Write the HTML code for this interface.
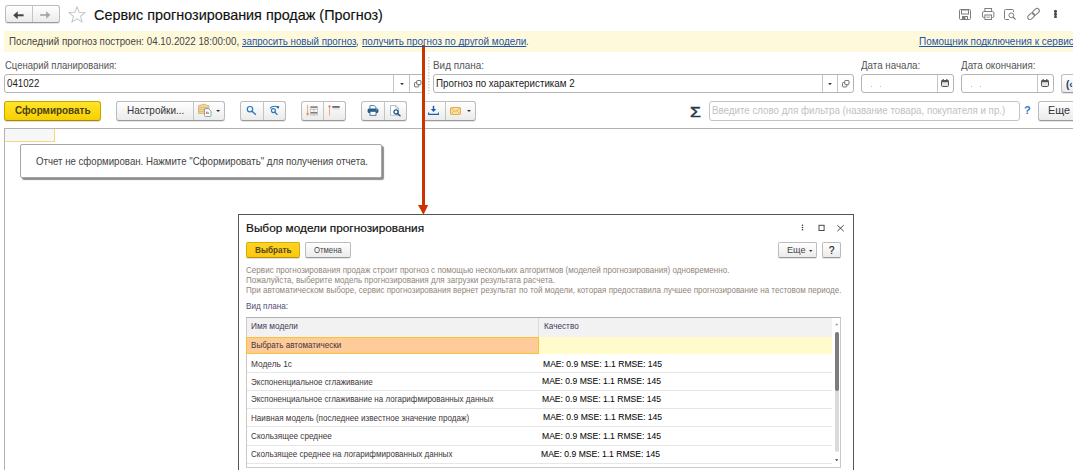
<!DOCTYPE html>
<html lang="ru"><head><meta charset="utf-8"><title>Сервис прогнозирования продаж (Прогноз)</title>
<style>
html,body{margin:0;padding:0;background:#fff}
body{width:1073px;height:470px;overflow:hidden;font-family:"Liberation Sans",sans-serif}
#root{position:relative;width:1073px;height:470px;overflow:hidden;background:#fff}
.t{position:absolute;white-space:pre;line-height:1;transform-origin:0 0}
.a{position:absolute;box-sizing:border-box}
.btn{border:1px solid #bcbcbc;border-bottom-color:#9a9a9a;border-radius:3px;background:linear-gradient(#ffffff,#ebebeb);box-shadow:0 1px 0 rgba(0,0,0,.10)}
.ybtn{border:1px solid #c8a400;border-bottom-color:#a88a00;border-radius:3px;background:linear-gradient(#ffe52a,#f7cf00);box-shadow:0 1px 0 rgba(0,0,0,.12)}
.inp{border:1px solid #b4b4b4;border-radius:3px;background:#fff}
.vd{width:1px;background:#c4c4c4}
svg{position:absolute;overflow:visible}

</style></head>
<body>
<div id="root">
<!-- ===== title row ===== -->
<div class="a btn" style="left:4.5px;top:5px;width:55px;height:18px"></div>
<div class="a vd" style="left:32.2px;top:6px;height:16px"></div>
<svg style="left:13.4px;top:10.5px" width="10.8" height="8.6" viewBox="0 0 10.8 8.6"><path d="M2.2 4.3H10.6" fill="none" stroke="#454545" stroke-width="2"/><path d="M0.2 4.3L4.7 0.3V8.3Z" fill="#454545"/></svg>
<svg style="left:40.4px;top:10.8px" width="10.6" height="8" viewBox="0 0 10.6 8"><path d="M0.2 4H8.2" fill="none" stroke="#a6a6a6" stroke-width="1.7"/><path d="M10.4 4L6.2 0.3V7.7Z" fill="#a6a6a6"/></svg>
<svg style="left:68.3px;top:6.3px" width="18" height="17" viewBox="0 0 17 16" preserveAspectRatio="none"><path d="M8.5 0.8L10.6 5.8L16 6.2L11.9 9.7L13.2 15L8.5 12.1L3.8 15L5.1 9.7L1 6.2L6.4 5.8Z" fill="#fff" stroke="#c3c8cf" stroke-width="1"/></svg>

<!-- top-right icons -->
<svg style="left:959px;top:9px" width="12" height="11" viewBox="0 0 12 11"><path d="M0.5 1.5Q0.5 0.5 1.5 0.5H10.5Q11.5 0.5 11.5 1.5V9.5Q11.5 10.5 10.5 10.5H1.5Q0.5 10.5 0.5 9.5Z" fill="#fff" stroke="#7d7d7d" stroke-width="1"/><rect x="2.5" y="1" width="7" height="4" fill="#fff" stroke="#7d7d7d" stroke-width="1"/><rect x="3" y="7" width="6" height="3.5" fill="#7d7d7d"/><rect x="6.5" y="8" width="1.5" height="2" fill="#fff"/></svg>
<svg style="left:981.8px;top:8px" width="12.4" height="12" viewBox="0 0 13 12" preserveAspectRatio="none"><rect x="3" y="0.5" width="7" height="3.5" fill="#fff" stroke="#7d7d7d"/><rect x="0.5" y="3.5" width="12" height="6" rx="1.5" fill="#fff" stroke="#7d7d7d"/><rect x="3" y="7" width="7" height="4.5" fill="#fff" stroke="#7d7d7d"/><path d="M4.5 9.2H8.5" stroke="#7d7d7d" stroke-width="0.8"/></svg>
<svg style="left:1004px;top:9px" width="13" height="12" viewBox="0 0 13 12"><path d="M9.5 3V1.5Q9.5 0.5 8.5 0.5H1.5Q0.5 0.5 0.5 1.5V9.5Q0.5 10.5 1.5 10.5H5" fill="none" stroke="#7d7d7d"/><circle cx="7.3" cy="6.3" r="2.4" fill="#fff" stroke="#7d7d7d"/><path d="M9 8L11.5 10.5" stroke="#7d7d7d" stroke-width="1.3"/></svg>
<svg style="left:1026.5px;top:8px" width="13" height="12" viewBox="0 0 13 12"><g fill="none" stroke="#7d7d7d" stroke-width="1.05" transform="rotate(-43 6.5 6)"><rect x="-0.6" y="3.7" width="7.6" height="4.6" rx="2.3"/><rect x="6" y="3.7" width="7.6" height="4.6" rx="2.3"/></g></svg>
<div class="a" style="left:1054.4px;top:10.4px;width:2.3px;height:2.3px;background:#484848;border-radius:50%"></div>
<div class="a" style="left:1054.4px;top:13.3px;width:2.3px;height:2.3px;background:#484848;border-radius:50%"></div>
<div class="a" style="left:1054.4px;top:16.2px;width:2.3px;height:2.3px;background:#484848;border-radius:50%"></div>

<!-- yellow info bar -->
<div class="a" style="left:4px;top:31px;width:1069px;height:21px;background:#fff9db"></div>

<!-- ===== fields row ===== -->
<div class="a inp" style="left:4px;top:74px;width:420px;height:19px"></div>
<div class="a vd" style="left:393px;top:75px;height:17px"></div>
<div class="a vd" style="left:409px;top:75px;height:17px"></div>
<svg style="left:399.5px;top:83px" width="4" height="2.2" viewBox="0 0 5 3"><path d="M0 0H5L2.5 3Z" fill="#333"/></svg>
<svg style="left:413.8px;top:79.8px" width="7.6" height="7.6" viewBox="0 0 8 8"><g fill="none" stroke="#5c5c5c" stroke-width="0.9"><rect x="2.9" y="0.5" width="4.4" height="4.4" rx="0.7"/><path d="M2.9 2.7H1.2Q0.5 2.7 0.5 3.4V6.6Q0.5 7.3 1.2 7.3H4.4Q5.1 7.3 5.1 6.6V4.9"/></g></svg>

<svg style="left:428.4px;top:57px" width="1.4" height="37" viewBox="0 0 1.4 37"><path d="M0.7 0V37" stroke="#cdcdcd" stroke-width="1.4" stroke-dasharray="1.5 1.5"/></svg>

<div class="a inp" style="left:433px;top:74px;width:421px;height:19px"></div>
<div class="a vd" style="left:822px;top:75px;height:17px"></div>
<div class="a vd" style="left:837px;top:75px;height:17px"></div>
<svg style="left:827.5px;top:83px" width="4" height="2.2" viewBox="0 0 5 3"><path d="M0 0H5L2.5 3Z" fill="#333"/></svg>
<svg style="left:842.3px;top:79.8px" width="7.6" height="7.6" viewBox="0 0 8 8"><g fill="none" stroke="#5c5c5c" stroke-width="0.9"><rect x="2.9" y="0.5" width="4.4" height="4.4" rx="0.7"/><path d="M2.9 2.7H1.2Q0.5 2.7 0.5 3.4V6.6Q0.5 7.3 1.2 7.3H4.4Q5.1 7.3 5.1 6.6V4.9"/></g></svg>

<div class="a inp" style="left:861px;top:74px;width:93px;height:19px"></div>
<div class="a vd" style="left:937px;top:75px;height:17px"></div>
<div class="a" style="left:871px;top:86px;width:1px;height:1px;background:#d6b98e"></div>
<div class="a" style="left:880px;top:86px;width:1px;height:1px;background:#d6b98e"></div>
<svg style="left:941px;top:79px" width="8" height="8" viewBox="0 0 8 8"><rect x="0.5" y="1.5" width="7" height="6" rx="1.2" fill="#e4e4e4" stroke="#555"/><rect x="0.5" y="1" width="7" height="2.2" fill="#555"/><rect x="1.6" y="0" width="1.2" height="2" fill="#555"/><rect x="5.2" y="0" width="1.2" height="2" fill="#555"/></svg>

<div class="a inp" style="left:961px;top:74px;width:93px;height:19px"></div>
<div class="a vd" style="left:1037px;top:75px;height:17px"></div>
<div class="a" style="left:971px;top:86px;width:1px;height:1px;background:#d6b98e"></div>
<div class="a" style="left:980px;top:86px;width:1px;height:1px;background:#d6b98e"></div>
<svg style="left:1041px;top:79px" width="8" height="8" viewBox="0 0 8 8"><rect x="0.5" y="1.5" width="7" height="6" rx="1.2" fill="#e4e4e4" stroke="#555"/><rect x="0.5" y="1" width="7" height="2.2" fill="#555"/><rect x="1.6" y="0" width="1.2" height="2" fill="#555"/><rect x="5.2" y="0" width="1.2" height="2" fill="#555"/></svg>

<div class="a btn" style="left:1061px;top:74px;width:30px;height:19px"></div>

<!-- ===== toolbar row ===== -->
<div class="a ybtn" style="left:4px;top:101px;width:97px;height:20px"></div>
<div class="a btn" style="left:116px;top:101px;width:109px;height:20px"></div>
<div class="a vd" style="left:192.7px;top:102px;height:18px"></div>
<div class="a btn" style="left:240px;top:101px;width:46px;height:20px"></div>
<div class="a vd" style="left:263px;top:102px;height:18px"></div>
<div class="a btn" style="left:301px;top:101px;width:45px;height:20px"></div>
<div class="a vd" style="left:323px;top:102px;height:18px"></div>
<div class="a btn" style="left:361px;top:101px;width:46px;height:20px"></div>
<div class="a vd" style="left:384px;top:102px;height:18px"></div>
<div class="a btn" style="left:422px;top:101px;width:54px;height:20px"></div>
<div class="a vd" style="left:445px;top:102px;height:18px"></div>
<!-- folder + doc icon -->
<svg style="left:197.5px;top:104px" width="14" height="13" viewBox="0 0 14 13">
<path d="M0.5 2.2Q0.5 1.2 1.5 1.2H3.2L4 0.4H7.6L8.4 1.4H10Q10.9 1.4 10.9 2.4V9.4H0.5Z" fill="#efd9a6" stroke="#d3a957" stroke-width="0.8"/>
<path d="M0.6 3.4H10.8M0.6 5.4H10.8M0.6 7.4H7" stroke="#d3a957" stroke-width="0.6"/>
<path d="M6.5 4.7H10.6L13 7.1V11.6Q13 12.5 12.1 12.5H7.4Q6.5 12.5 6.5 11.6Z" fill="#fff" stroke="#7f96ae" stroke-width="0.9"/>
<rect x="8.1" y="7.6" width="1.5" height="2.4" fill="#e46a5e"/><rect x="9.6" y="8.4" width="1.4" height="1.6" fill="#6cb57c"/>
</svg>
<svg style="left:215.6px;top:110.2px" width="4.2" height="2" viewBox="0 0 5 2.4"><path d="M0 0H5L2.5 2.4Z" fill="#333"/></svg>
<!-- search -->
<svg style="left:245px;top:104px" width="13" height="13" viewBox="0 0 13 13"><circle cx="5" cy="5.2" r="2.7" fill="none" stroke="#2a76ba" stroke-width="1.15"/><path d="M7 7.3L10.4 10.2" stroke="#2a76ba" stroke-width="1.4" stroke-linecap="round"/></svg>
<!-- search refresh -->
<svg style="left:268px;top:104px" width="13" height="13" viewBox="0 0 13 13"><circle cx="5.4" cy="6.6" r="2" fill="none" stroke="#2a76ba" stroke-width="1.1"/><path d="M6.9 8.2L9 10.4" stroke="#2a76ba" stroke-width="1.35" stroke-linecap="round"/><path d="M1.9 4.4Q5.4 0.8 9.6 3.2" fill="none" stroke="#2a76ba" stroke-width="1.05"/><path d="M8.6 2L11.5 2.5L10 5Z" fill="#1f5a94"/></svg>
<!-- sort desc -->
<svg style="left:305px;top:104px" width="14" height="13" viewBox="0 0 14 13">
<path d="M2.6 0.9V10" stroke="#f29a62" stroke-width="0.9"/><path d="M1.5 9.4H3.7L2.6 11.5Z" fill="#ec7f45" stroke="#ec7f45" stroke-width="0.4"/>
<rect x="5.4" y="2.4" width="7.1" height="1.4" fill="#6a6a6a"/><rect x="5.4" y="4.9" width="7.1" height="1.1" fill="#c8c8c8"/>
<rect x="5.4" y="8.1" width="7.1" height="1.4" fill="#6a6a6a"/><rect x="5.4" y="10.4" width="7.1" height="1.1" fill="#c8c8c8"/>
<path d="M5.4 2.4V11.5M8.95 2.4V11.5M12.5 2.4V11.5" stroke="#aaa" stroke-width="0.5"/>
</svg>
<!-- sort asc -->
<svg style="left:327px;top:104px" width="14" height="13" viewBox="0 0 14 13">
<path d="M2.5 2.4V11.6" stroke="#f29a62" stroke-width="0.9"/><path d="M1.4 3.1H3.6L2.5 1Z" fill="#ec7f45" stroke="#ec7f45" stroke-width="0.4"/>
<rect x="5.3" y="2" width="7.4" height="1.8" fill="#6a6a6a"/><rect x="5.3" y="4.5" width="7.4" height="0.9" fill="#cfcfcf"/>
</svg>
<!-- printer -->
<svg style="left:367px;top:105px" width="12" height="11" viewBox="0 0 12 11">
<path d="M3 3.6V0.6H7.2L8.9 2.2V3.6" fill="#fff" stroke="#2b5b88" stroke-width="0.8"/>
<rect x="0.6" y="3.6" width="10.8" height="4.5" rx="1.5" fill="#2b5b88"/>
<rect x="3" y="6.3" width="6" height="4" fill="#fff" stroke="#2b5b88" stroke-width="0.8"/>
<rect x="8.8" y="4.6" width="1.4" height="0.8" fill="#a9cbea"/>
</svg>
<!-- preview -->
<svg style="left:390px;top:105px" width="12" height="12" viewBox="0 0 12 12">
<path d="M0.5 0.5H5.8L8.5 3.2V10.3H0.5Z" fill="#fff" stroke="#9bafc3" stroke-width="0.8"/><path d="M5.8 0.5V3.2H8.5" fill="none" stroke="#9bafc3" stroke-width="0.7"/>
<circle cx="6" cy="6.9" r="2.1" fill="#fff" stroke="#23527f" stroke-width="1.3"/><path d="M7.7 8.7L10 10.7" stroke="#23527f" stroke-width="1.5" stroke-linecap="round"/>
</svg>
<!-- download -->
<svg style="left:428px;top:105px" width="12" height="11" viewBox="0 0 12 11">
<path d="M5.5 0.8V5" stroke="#1d5fa8" stroke-width="1.5"/><path d="M2.8 3.9H8.2L5.5 7Z" fill="#1d5fa8"/>
<path d="M0.6 7.4V9.4H10.4V7.4" fill="none" stroke="#1d5fa8" stroke-width="1.1"/>
</svg>
<!-- mail -->
<svg style="left:450px;top:106.5px" width="11" height="8" viewBox="0 0 11 8">
<rect x="0.5" y="0.5" width="10" height="7" rx="0.8" fill="#f9dfa6" stroke="#e6ac45" stroke-width="1"/>
<path d="M1 1L5.5 4.6L10 1M1 7L4.2 3.8M10 7L6.8 3.8" fill="none" stroke="#e6ac45" stroke-width="0.8"/>
</svg>
<svg style="left:467.2px;top:110.4px" width="4" height="2" viewBox="0 0 5 2.4"><path d="M0 0H5L2.5 2.4Z" fill="#333"/></svg>

<div class="a inp" style="left:709px;top:101px;width:311px;height:20px;border-color:#c4c4c4"></div>
<div class="a btn" style="left:1038px;top:101px;width:50px;height:20px"></div>

<!-- ===== report area ===== -->
<div class="a" style="left:4px;top:128px;width:1069px;height:1px;background:#b2b2b2"></div>
<div class="a" style="left:4px;top:128px;width:1px;height:342px;background:#b2b2b2"></div>
<div class="a" style="left:5px;top:129px;width:50px;height:13px;background:#f7f7f7;border-right:1px solid #f6d877;border-bottom:1px solid #f6d877"></div>
<div class="a" style="left:20px;top:144px;width:362px;height:34px;background:#fff;border:1px solid #a6a6a6;border-radius:2px;box-shadow:2px 2px 1px #8c8c8c"></div>

<!-- red arrow -->
<div class="a" style="left:422px;top:45px;width:3px;height:161px;background:#cc3300"></div>
<svg style="left:418px;top:205px" width="10.2" height="9.8" viewBox="0 0 10.2 9.8"><path d="M0 0H10.2L5.45 9.8Z" fill="#cc3300"/></svg>

<!-- ===== dialog ===== -->
<div class="a" style="left:238px;top:214px;width:616px;height:270px;background:#fff;border:1px solid #555"></div>
<!-- dialog window icons -->
<svg style="left:800.5px;top:224px" width="3" height="7" viewBox="0 0 3 7"><circle cx="1.5" cy="1.2" r="0.8" fill="#3a3a3a"/><circle cx="1.5" cy="3.5" r="0.8" fill="#3a3a3a"/><circle cx="1.5" cy="5.8" r="0.8" fill="#3a3a3a"/></svg>
<svg style="left:818px;top:224px" width="8" height="8" viewBox="0 0 8 8"><rect x="1" y="1.3" width="5.1" height="5.2" fill="none" stroke="#4a4a4a" stroke-width="1"/></svg>
<svg style="left:836.9px;top:224.7px" width="7" height="6.4" viewBox="0 0 6.5 6" preserveAspectRatio="none"><path d="M0.3 0.2L6.2 5.8M6.2 0.2L0.3 5.8" stroke="#444" stroke-width="0.9" fill="none"/></svg>

<div class="a ybtn" style="left:246px;top:242px;width:54px;height:16px;border-radius:2px;background:linear-gradient(#ffd424,#fcc80e);border-color:#d4ab08;border-bottom-color:#b8930a"></div>
<div class="a btn" style="left:305px;top:242px;width:46px;height:16px;border-radius:2px"></div>
<div class="a btn" style="left:778px;top:242px;width:39px;height:16px;border-radius:2px"></div>
<svg style="left:808.8px;top:249.8px" width="3.6" height="2" viewBox="0 0 5 3"><path d="M0 0H5L2.5 3Z" fill="#333"/></svg>
<div class="a btn" style="left:822px;top:242px;width:19px;height:16px;border-radius:2px"></div>

<!-- table -->
<div class="a" style="left:246px;top:317px;width:595px;height:151px;background:#fff;border:1px solid #c9c9c9;border-top-color:#b0b0b0"></div>
<div class="a" style="left:247px;top:318px;width:585px;height:19px;background:#f2f2f2"></div>
<div class="a" style="left:538px;top:318px;width:1px;height:19px;background:#dcdcdc"></div>
<div class="a" style="left:246px;top:337px;width:293px;height:17px;background:#ffcc99;border:1px solid #f6c432"></div>
<div class="a" style="left:539px;top:337px;width:293px;height:17px;background:#fffbcd"></div>
<div class="a" style="left:247px;top:372px;width:585px;height:1px;background:#e6e6e6"></div>
<div class="a" style="left:247px;top:390px;width:585px;height:1px;background:#e6e6e6"></div>
<div class="a" style="left:247px;top:408px;width:585px;height:1px;background:#e6e6e6"></div>
<div class="a" style="left:247px;top:426px;width:585px;height:1px;background:#e6e6e6"></div>
<div class="a" style="left:247px;top:445px;width:585px;height:1px;background:#e6e6e6"></div>
<div class="a" style="left:247px;top:463px;width:585px;height:1px;background:#e6e6e6"></div>
<!-- scrollbar -->
<div class="a" style="left:834.5px;top:332px;width:4.2px;height:120px;background:#dadada;border-radius:2px"></div>
<div class="a" style="left:834.5px;top:332px;width:4.2px;height:59px;background:#7c7c7c;border-radius:2px"></div>
<svg style="left:835px;top:323px" width="3.4" height="2.4" viewBox="0 0 5 3"><path d="M0 3H5L2.5 0Z" fill="#9a9a9a"/></svg>
<svg style="left:835px;top:459px" width="3.4" height="2.4" viewBox="0 0 5 3"><path d="M0 0H5L2.5 3Z" fill="#444"/></svg>

<span class="t" style="left:93.66px;top:8px;font-size:14.5px;color:#111;transform:scaleX(0.9917);-webkit-text-stroke:0.15px #111;">Сервис прогнозирования продаж (Прогноз)</span>
<span class="t" style="left:8.71px;top:36px;font-size:11px;color:#454545;transform:scaleX(0.8879);">Последний прогноз построен: 04.10.2022 18:00:00,</span>
<span class="t" style="left:241.56px;top:36px;font-size:11px;color:#2254a6;transform:scaleX(0.8852);text-decoration:underline;text-decoration-skip-ink:none;">запросить новый прогноз</span>
<span class="t" style="left:356.13px;top:36px;font-size:11px;color:#454545;transform:scaleX(0.8700);">,</span>
<span class="t" style="left:361.82px;top:36px;font-size:11px;color:#2254a6;transform:scaleX(0.9018);text-decoration:underline;text-decoration-skip-ink:none;">получить прогноз по другой модели</span>
<span class="t" style="left:525.63px;top:36px;font-size:11px;color:#454545;transform:scaleX(0.8700);">.</span>
<span class="t" style="left:919.09px;top:36px;font-size:11px;color:#2254a6;transform:scaleX(0.9069);text-decoration:underline;text-decoration-skip-ink:none;">Помощник подключения к сервису прогнозирования</span>
<span class="t" style="left:5.07px;top:60px;font-size:11px;color:#555;transform:scaleX(0.8599);">Сценарий планирования:</span>
<span class="t" style="left:7.06px;top:78px;font-size:11px;color:#222;transform:scaleX(0.8811);">041022</span>
<span class="t" style="left:433.20px;top:60px;font-size:11px;color:#555;transform:scaleX(0.9005);">Вид плана:</span>
<span class="t" style="left:436.41px;top:78px;font-size:11px;color:#222;transform:scaleX(0.8887);">Прогноз по характеристикам 2</span>
<span class="t" style="left:861.30px;top:60px;font-size:11px;color:#555;transform:scaleX(0.8867);">Дата начала:</span>
<span class="t" style="left:961.40px;top:60px;font-size:11px;color:#555;transform:scaleX(0.8894);">Дата окончания:</span>
<span class="t" style="left:14.55px;top:105px;font-size:11px;color:#4a4112;transform:scaleX(0.9012);font-weight:700;">Сформировать</span>
<span class="t" style="left:126.69px;top:105px;font-size:11px;color:#333;transform:scaleX(0.9086);">Настройки...</span>
<span class="t" style="left:711.61px;top:105px;font-size:11px;color:#c1c1c1;transform:scaleX(0.8861);">Введите слово для фильтра (название товара, покупателя и пр.)</span>
<span class="t" style="left:1024.00px;top:105px;font-size:11px;color:#2f7ac8;transform:scaleX(1.0000);font-weight:700;">?</span>
<span class="t" style="left:1047.77px;top:105px;font-size:11px;color:#333;transform:scaleX(0.9833);">Еще</span>
<span class="t" style="left:1065.55px;top:79px;font-size:11px;color:#1d3b6e;transform:scaleX(0.9000);font-weight:700;">(‹</span>
<span class="t" style="left:689.82px;top:104px;font-size:15px;color:#26384d;transform:scaleX(1.1750);-webkit-text-stroke:0.5px #26384d;">Σ</span>
<span class="t" style="left:35.81px;top:156px;font-size:11px;color:#444;transform:scaleX(0.8785);">Отчет не сформирован. Нажмите "Сформировать" для получения отчета.</span>
<span class="t" style="left:246.00px;top:223px;font-size:11.8px;color:#111;transform:scaleX(1.0014);-webkit-text-stroke:0.2px #111;">Выбор модели прогнозирования</span>
<span class="t" style="left:254.54px;top:246px;font-size:9px;color:#4f4822;transform:scaleX(0.9108);font-weight:700;">Выбрать</span>
<span class="t" style="left:314.07px;top:246px;font-size:9px;color:#444;transform:scaleX(0.8583);">Отмена</span>
<span class="t" style="left:245.95px;top:266px;font-size:9px;color:#92867a;transform:scaleX(0.8986);">Сервис прогнозирования продаж строит прогноз с помощью нескольких алгоритмов (моделей прогнозирования) одновременно.</span>
<span class="t" style="left:245.73px;top:276px;font-size:9px;color:#92867a;transform:scaleX(0.8968);">Пожалуйста, выберите модель прогнозирования для загрузки результата расчета.</span>
<span class="t" style="left:245.73px;top:286px;font-size:9px;color:#92867a;transform:scaleX(0.8934);">При автоматическом выборе, сервис прогнозирования вернет результат по той модели, которая предоставила лучшее прогнозирование на тестовом периоде.</span>
<span class="t" style="left:245.92px;top:302px;font-size:9px;color:#564c74;transform:scaleX(0.9073);">Вид плана:</span>
<span class="t" style="left:251.06px;top:322px;font-size:9px;color:#443a5c;transform:scaleX(0.9150);">Имя модели</span>
<span class="t" style="left:543.57px;top:322px;font-size:9px;color:#443a5c;transform:scaleX(0.9122);">Качество</span>
<span class="t" style="left:251.08px;top:341px;font-size:9px;color:#41363a;transform:scaleX(0.8967);">Выбрать автоматически</span>
<span class="t" style="left:251.06px;top:360px;font-size:9px;color:#41363a;transform:scaleX(0.9249);">Модель 1с</span>
<span class="t" style="left:251.30px;top:378px;font-size:9px;color:#41363a;transform:scaleX(0.8944);">Экспоненциальное сглаживание</span>
<span class="t" style="left:251.30px;top:395px;font-size:9px;color:#41363a;transform:scaleX(0.8905);">Экспоненциальное сглаживание на логарифмированных данных</span>
<span class="t" style="left:251.07px;top:414px;font-size:9px;color:#41363a;transform:scaleX(0.9004);">Наивная модель (последнее известное значение продаж)</span>
<span class="t" style="left:251.29px;top:432px;font-size:9px;color:#41363a;transform:scaleX(0.9117);">Скользящее среднее</span>
<span class="t" style="left:251.30px;top:450px;font-size:9px;color:#41363a;transform:scaleX(0.8952);">Скользящее среднее на логарифмированных данных</span>
<span class="t" style="left:542.91px;top:359px;font-size:9.4px;color:#0a0a0a;transform:scaleX(0.9143);-webkit-text-stroke:0.08px #0a0a0a;">MAE: 0.9 MSE: 1.1 RMSE: 145</span>
<span class="t" style="left:542.01px;top:376px;font-size:9.4px;color:#0a0a0a;transform:scaleX(0.9143);-webkit-text-stroke:0.08px #0a0a0a;">MAE: 0.9 MSE: 1.1 RMSE: 145</span>
<span class="t" style="left:541.61px;top:394px;font-size:9.4px;color:#0a0a0a;transform:scaleX(0.9143);-webkit-text-stroke:0.08px #0a0a0a;">MAE: 0.9 MSE: 1.1 RMSE: 145</span>
<span class="t" style="left:543.31px;top:412px;font-size:9.4px;color:#0a0a0a;transform:scaleX(0.9143);-webkit-text-stroke:0.08px #0a0a0a;">MAE: 0.9 MSE: 1.1 RMSE: 145</span>
<span class="t" style="left:541.71px;top:431px;font-size:9.4px;color:#0a0a0a;transform:scaleX(0.9143);-webkit-text-stroke:0.08px #0a0a0a;">MAE: 0.9 MSE: 1.1 RMSE: 145</span>
<span class="t" style="left:540.61px;top:449px;font-size:9.4px;color:#0a0a0a;transform:scaleX(0.9143);-webkit-text-stroke:0.08px #0a0a0a;">MAE: 0.9 MSE: 1.1 RMSE: 145</span>
<span class="t" style="left:787.24px;top:246px;font-size:9px;color:#444;transform:scaleX(1.0145);">Еще</span>
<span class="t" style="left:829.32px;top:246px;font-size:10px;color:#222;transform:scaleX(0.9684);-webkit-text-stroke:0.2px #222;">?</span>
</div>
</body></html>
